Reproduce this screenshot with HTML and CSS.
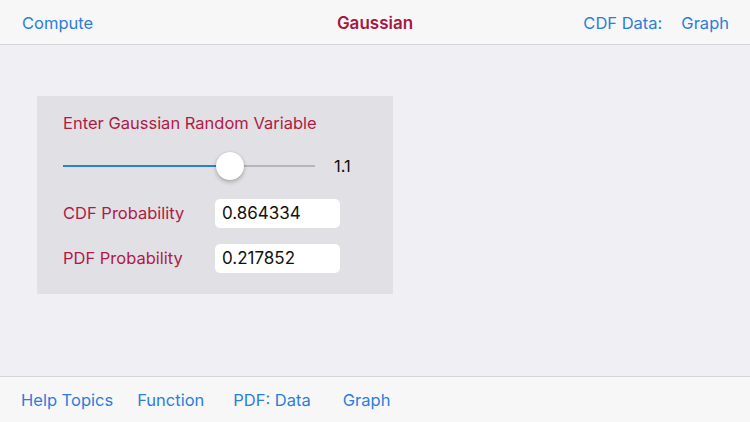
FILE: index.html
```html
<!DOCTYPE html>
<html lang="en">
<head>
  <meta charset="UTF-8" />
  <meta name="viewport" content="width=device-width, initial-scale=1.0"/>
  <title>Gaussian</title>
  <link rel="stylesheet" href="styles.css">
</head>
<body>
  <div class="nav-bar">
    <span class="nav-link">Compute</span>
    <span class="nav-title">Gaussian</span>
    <div class="nav-right">
      <span class="nav-link">CDF Data:</span>
      <span class="nav-link">Graph</span>
    </div>
  </div>

  <div class="content">
    <div class="panel">
      <div class="panel-title">Enter Gaussian Random Variable</div>
      <div class="slider-row">
        <div class="slider">
          <div class="track-fill"></div>
          <div class="track-rest"></div>
          <div class="thumb"></div>
        </div>
        <span class="slider-value">1.1</span>
      </div>
      <div class="field-row">
        <span class="field-label">CDF Probability</span>
        <div class="field-box">0.864334</div>
      </div>
      <div class="field-row">
        <span class="field-label">PDF Probability</span>
        <div class="field-box">0.217852</div>
      </div>
    </div>
  </div>

  <div class="tool-bar">
    <span class="nav-link help">Help Topics</span>
    <span class="nav-link func">Function</span>
    <span class="nav-link pdf">PDF: Data</span>
    <span class="nav-link graph">Graph</span>
  </div>
</body>
</html>
```

FILE: styles.css
```css
body {
  margin: 0;
  width: 750px;
  height: 422px;
  background-color: #efeff4;
  font-family: Inter, 'Liberation Sans', sans-serif;
  display: flex;
  flex-direction: column;
  overflow: hidden;
}

.nav-bar {
  height: 42px;
  background-color: #f7f7f8;
  border-bottom: 1px solid #d6d6da;
  display: flex;
  align-items: center;
  justify-content: space-between;
  padding: 2px 21px 0 22px;
  position: relative;
  flex-shrink: 0;
}

.nav-link {
  color: #2c7ed8;
  font-size: 16.5px;
}

.nav-title {
  position: absolute;
  left: 0;
  right: 0;
  text-align: center;
  color: #a8173f;
  font-size: 17px;
  font-weight: 600;
  pointer-events: none;
}

.nav-right {
  display: flex;
  gap: 19px;
}

.content {
  flex: 1;
  padding: 51px 0 0 37px;
}

.panel {
  width: 356px;
  height: 198px;
  box-sizing: border-box;
  background-color: #e1e0e5;
  padding: 17px 0 0 26px;
}

.panel-title {
  color: #b01a45;
  font-size: 16.5px;
  height: 20px;
  line-height: 20px;
}

.slider-row {
  display: flex;
  align-items: center;
  margin-top: 19px;
  height: 28px;
}

.slider {
  position: relative;
  width: 252px;
  height: 28px;
  display: flex;
  align-items: center;
}

.track-fill {
  width: 167px;
  height: 2px;
  background-color: #2c7ed8;
}

.track-rest {
  flex: 1;
  height: 2px;
  background-color: #b6b6ba;
}

.thumb {
  position: absolute;
  left: 153px;
  top: 0;
  width: 28px;
  height: 28px;
  border-radius: 50%;
  background-color: #ffffff;
  box-shadow: 0 2px 4px rgba(0, 0, 0, 0.25), 0 0 1px rgba(0, 0, 0, 0.2);
}

.slider-value {
  margin-left: 19px;
  font-size: 16.5px;
  color: #111111;
}

.field-row {
  display: flex;
  align-items: center;
  margin-top: 18px;
  height: 30px;
}

.field-row + .field-row {
  margin-top: 15px;
}

.field-label {
  width: 152px;
  color: #b01a45;
  font-size: 16.5px;
}

.field-box {
  width: 125px;
  height: 29px;
  box-sizing: border-box;
  background-color: #ffffff;
  border-radius: 5px;
  padding: 0 7px;
  display: flex;
  align-items: center;
  font-size: 17px;
  color: #111111;
}

.tool-bar {
  height: 45px;
  background-color: #f7f7f8;
  border-top: 1px solid #d6d6da;
  display: flex;
  align-items: center;
  padding: 0 0 0 21px;
  flex-shrink: 0;
}

.func {
  margin-left: 24px;
}

.pdf {
  margin-left: 29px;
}

.graph {
  margin-left: 32px;
}
```
